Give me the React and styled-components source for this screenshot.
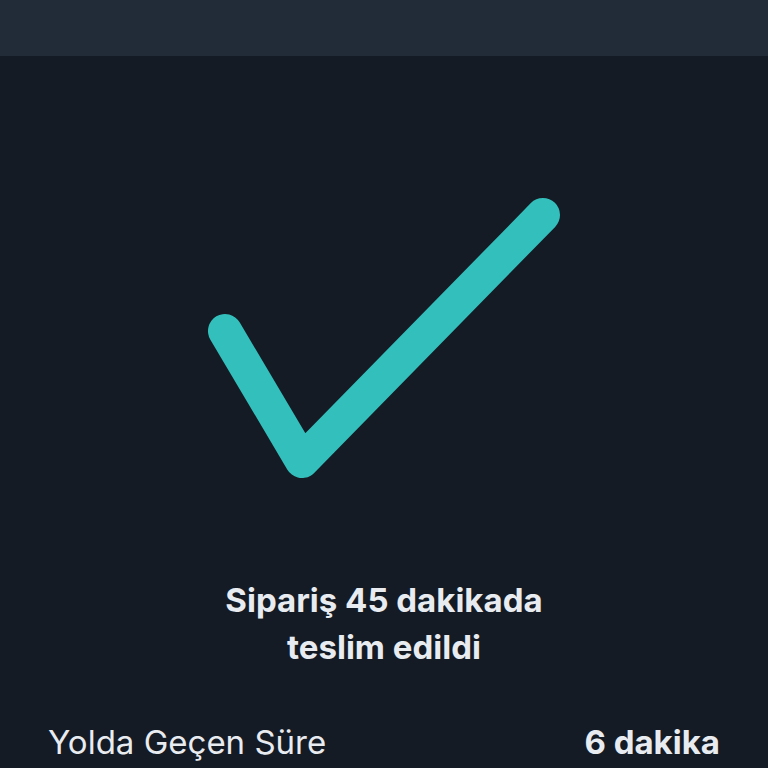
import styled, { createGlobalStyle } from "styled-components";

const GlobalStyle = createGlobalStyle`
    html, body {
        margin: 0;
        padding: 0;
        background: #141b25;
    }
    * {
        box-sizing: border-box;
    }
`

export default function App(){
    return (
        <Page>
            <GlobalStyle />
            <TopBar />
            <Content>
                <CheckWrap>
                    <svg width="768" height="300" viewBox="0 180 768 300">
                        <polyline
                            points="225,331 302,461 543,215"
                            fill="none"
                            stroke="#33bfbb"
                            strokeWidth="34"
                            strokeLinecap="round"
                            strokeLinejoin="round"
                        />
                    </svg>
                </CheckWrap>
                <Title>Sipariş 45 dakikada<br />teslim edildi</Title>
                <InfoRow>
                    <Label>Yolda Geçen Süre</Label>
                    <Value>6 dakika</Value>
                </InfoRow>
            </Content>
        </Page>
    )
}

const Page = styled.main`
    width: 768px;
    height: 768px;
    overflow: hidden;
    background: #141b25;
    font-family: Inter, "Noto Sans", sans-serif;
    display: flex;
    flex-direction: column;
`
const TopBar = styled.header`
    height: 56px;
    background: #222b38;
    flex-shrink: 0;
`
const Content = styled.section`
    display: flex;
    flex-direction: column;
    align-items: center;
`
const CheckWrap = styled.div`
    margin-top: 124px;
    height: 300px;
    display: flex;
    justify-content: center;
`
const Title = styled.h1`
    margin: 97px 0 0;
    font-size: 33px;
    font-weight: 700;
    line-height: 47px;
    text-align: center;
    color: #e8ebf0;
`
const InfoRow = styled.div`
    width: 100%;
    margin-top: 51px;
    padding: 0 48px;
    display: flex;
    justify-content: space-between;
    align-items: center;
    font-size: 33px;
    line-height: 40px;
    color: #e8ebf0;
`
const Label = styled.span`
    font-weight: 400;
`
const Value = styled.span`
    font-weight: 700;
`
